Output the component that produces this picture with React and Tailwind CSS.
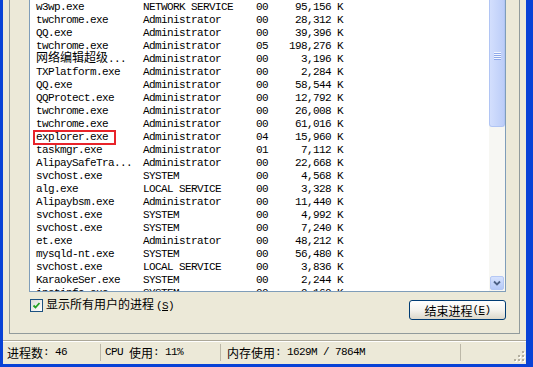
import React from 'react';

// process rows: image name, user, session, mem usage
const ROWS = [
  ['w3wp.exe', 'NETWORK SERVICE', '00', '95,156 K'],
  ['twchrome.exe', 'Administrator', '00', '28,312 K'],
  ['QQ.exe', 'Administrator', '00', '39,396 K'],
  ['twchrome.exe', 'Administrator', '05', '198,276 K'],
  ['网络编辑超级...', 'Administrator', '00', '3,196 K'],
  ['TXPlatform.exe', 'Administrator', '00', '2,284 K'],
  ['QQ.exe', 'Administrator', '00', '58,544 K'],
  ['QQProtect.exe', 'Administrator', '00', '12,792 K'],
  ['twchrome.exe', 'Administrator', '00', '26,008 K'],
  ['twchrome.exe', 'Administrator', '00', '61,016 K'],
  ['explorer.exe', 'Administrator', '04', '15,960 K'],
  ['taskmgr.exe', 'Administrator', '01', '7,112 K'],
  ['AlipaySafeTra...', 'Administrator', '00', '22,668 K'],
  ['svchost.exe', 'SYSTEM', '00', '4,568 K'],
  ['alg.exe', 'LOCAL SERVICE', '00', '3,328 K'],
  ['Alipaybsm.exe', 'Administrator', '00', '11,440 K'],
  ['svchost.exe', 'SYSTEM', '00', '4,992 K'],
  ['svchost.exe', 'SYSTEM', '00', '7,240 K'],
  ['et.exe', 'Administrator', '00', '48,212 K'],
  ['mysqld-nt.exe', 'SYSTEM', '00', '56,480 K'],
  ['svchost.exe', 'LOCAL SERVICE', '00', '3,836 K'],
  ['KaraokeSer.exe', 'SYSTEM', '00', '2,244 K'],
  ['inetinfo.exe', 'SYSTEM', '00', '9,160 K'],
];

const CJK_RE = /([\u3000-\u9fff\uff00-\uffef]+)/;

// CJK runs at 12px, ascii runs in a 6px-wide mono, like SimSun
function Mix({ text }) {
  return text.split(CJK_RE).filter(Boolean).map((p, i) =>
    CJK_RE.test(p)
      ? <span key={i} className="font-['Noto_Sans_CJK_SC',sans-serif] text-[12px]">{p}</span>
      : <span key={i} className="font-['Liberation_Mono',monospace] text-[11px] tracking-[-0.6px]">{p}</span>
  );
}

function Row({ row }) {
  const [name, user, session, mem] = row;
  return (
    <div className="grid grid-cols-[107px_113px_30px_57px] pl-[6px] h-[13px] leading-[9px] whitespace-pre text-black">
      <div><Mix text={name} /></div>
      <div><Mix text={user} /></div>
      <div><Mix text={session} /></div>
      <div className="text-right"><Mix text={mem} /></div>
    </div>
  );
}

function Scrollbar() {
  return (
    <div className="w-[16px] flex flex-col bg-[#f7f7f3]">
      <div className="h-[127px] rounded-b-[3px] border-x border-b border-[#b1c5f4] bg-linear-to-r from-[#d3dffd] to-[#bccdf8] flex flex-col items-center pt-[52px]">
        {[0, 1, 2, 3].map(i => (
          <div key={i} className="w-[7px] h-[2px] border-t border-[#f3f7fe] bg-[#8ea8ea]" />
        ))}
      </div>
      <div className="flex-1" />
      <div className="mx-[1px] mb-[1px] h-[14px] rounded-[2px] border border-[#b5c8f4] bg-linear-to-b from-[#d6e2fd] to-[#b5c9f7] flex items-center justify-center">
        <svg width="8" height="6" viewBox="0 0 8 6">
          <path d="M1 1.5 L4 4.5 L7 1.5" fill="none" stroke="#4d6185" strokeWidth="1.8" />
        </svg>
      </div>
    </div>
  );
}

function Grip() {
  const dots = [];
  for (let i = 0; i < 3; i++) {
    for (let j = 0; j < 3; j++) {
      if (i + j >= 2) dots.push([i * 4, j * 4]);
    }
  }
  return (
    <svg width="12" height="12" viewBox="0 0 12 12">
      {dots.map(([x, y]) => (
        <g key={`${x}-${y}`}>
          <rect x={x + 1} y={y + 1} width="2" height="2" fill="#ffffff" />
          <rect x={x} y={y} width="2" height="2" fill="#b3af9f" />
        </g>
      ))}
    </svg>
  );
}

export default function App() {
  return (
    <div className="w-[533px] h-[367px] overflow-hidden bg-[#0842d6] pl-[3px] pr-[7px] pb-[3px] flex">
      <div className="flex-1 flex flex-col bg-[#ece9d8]">
        <div className="h-[340px] px-[6px]">
          <div className="h-[334px] border-x border-b border-[#919b9c] pl-[19px] pr-[13px] flex flex-col">
            <div className="relative h-[292px] flex border-x border-b border-[#7f9db9] bg-white">
              <div className="flex-1 overflow-hidden">
                {ROWS.map((r, i) => <Row key={i} row={r} />)}
              </div>
              <Scrollbar />
              <div className="absolute left-[3px] top-[130px] w-[83px] h-[15px] border-2 border-[#e8232a]" />
            </div>

            <div className="flex justify-between items-start">
              <label className="flex items-center gap-[3px] mt-[5px] ml-[1px] leading-[13px] text-black whitespace-pre">
                <span className="w-[13px] h-[13px] border border-[#1c5180] bg-linear-to-br from-[#dcdcd7] to-[#ffffff] flex items-center justify-center">
                  <svg width="9" height="9" viewBox="0 0 9 9">
                    <path d="M1.5 4.5 L3.5 6.5 L7.5 2" fill="none" stroke="#21a121" strokeWidth="1.8" />
                  </svg>
                </span>
                <span>
                  <Mix text="显示所有用户的进程" />
                  <span className="ml-[2px] font-['Liberation_Mono',monospace] text-[11px] tracking-[-0.6px]">(<span className="underline">S</span>)</span>
                </span>
              </label>
              <button className="mt-[8px] w-[97px] h-[20px] rounded-[3px] border border-[#003c74] bg-linear-to-b from-[#ffffff] via-[#f4f3ee] to-[#dcd8cb] flex items-center justify-center leading-[13px] text-black whitespace-pre">
                <Mix text="结束进程" />
                <span className="font-['Liberation_Mono',monospace] text-[11px] tracking-[-0.6px]">(<span className="underline">E</span>)</span>
              </button>
            </div>
          </div>
        </div>

        <div className="h-[24px] border-t border-[#aca899] shadow-[inset_0_1px_0_#ffffff] flex text-black leading-[13px] whitespace-pre">
          <div className="w-[98px] pl-[4px] my-[3px] flex items-center border-r border-[#bcb8a8]">
            <Mix text="进程数: 46" />
          </div>
          <div className="w-[120px] pl-[4px] my-[3px] flex items-center border-r border-[#bcb8a8]">
            <Mix text="CPU 使用: 11%" />
          </div>
          <div className="w-[240px] pl-[6px] my-[3px] flex items-center border-r border-[#bcb8a8]">
            <Mix text="内存使用: 1629M / 7864M" />
          </div>
          <div className="flex-1 flex items-end justify-end pb-[1px]">
            <Grip />
          </div>
        </div>
      </div>
    </div>
  );
}
